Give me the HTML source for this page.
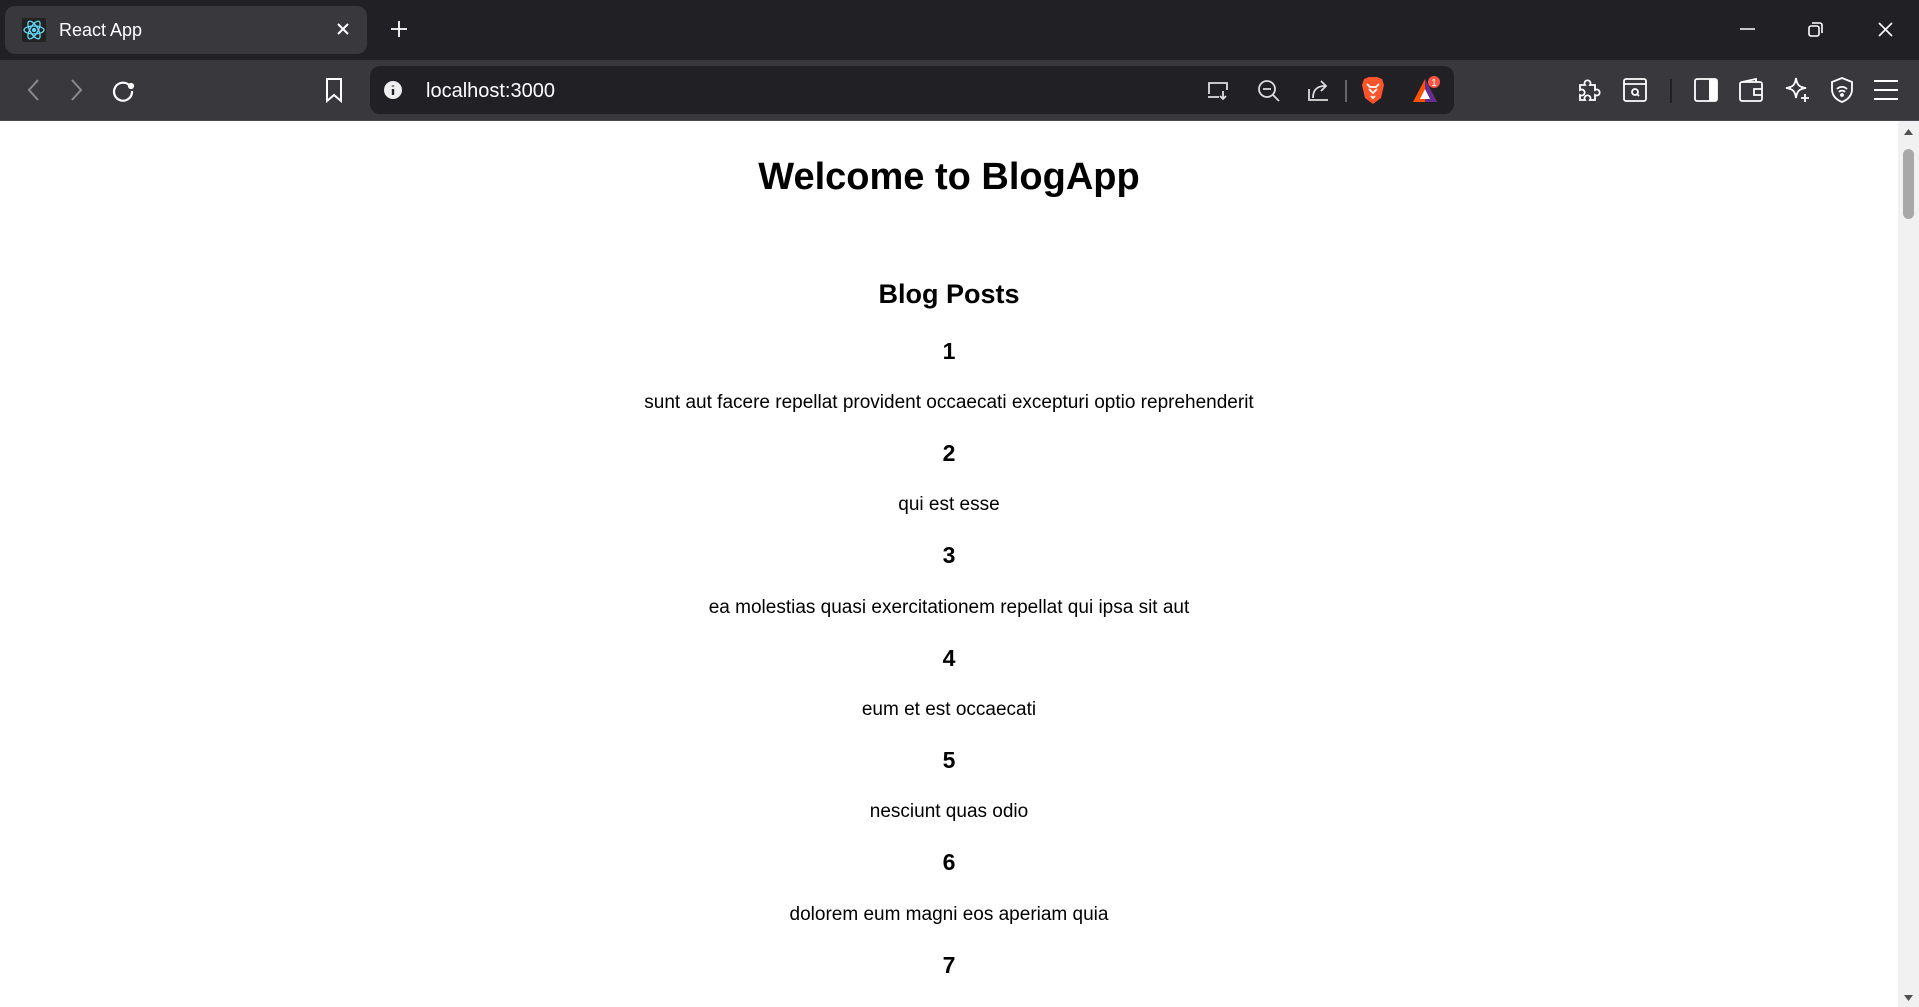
<!DOCTYPE html>
<html><head><meta charset="utf-8"><style>
*{margin:0;padding:0;box-sizing:border-box}
body{width:1919px;height:1007px;overflow:hidden;background:#fff;font-family:"Liberation Sans",sans-serif;position:relative}
.tabbar{position:absolute;left:0;top:0;width:1919px;height:60px;background:#202025}
.tab{position:absolute;left:5px;top:6px;width:362px;height:48px;background:#38383d;border-radius:10px}
.toolbar{position:absolute;left:0;top:60px;width:1919px;height:61px;background:#38383d;border-bottom:1px solid #4a4a50}
.url{position:absolute;left:370px;top:66px;width:1084px;height:48px;background:#202025;border-radius:10px}
.ab{position:absolute}
svg{position:absolute;overflow:visible}
.c{position:absolute;left:0;width:1898px;text-align:center;color:#000}
.n{font-weight:bold;font-size:23px}
.p{font-size:19px}
.sb{position:absolute;left:1898px;top:121px;width:21px;height:886px;background:#f1f1f1}
</style></head><body>
<div class="tabbar"></div>
<div class="tab"></div>
<svg style="left:22px;top:18px" width="24" height="24" viewBox="-12 -12 24 24"><rect x="-12" y="-12" width="24" height="24" fill="#222" rx="2"/><g fill="none" stroke="#61dafb" stroke-width="1.3"><ellipse rx="10" ry="4"/><ellipse rx="10" ry="4" transform="rotate(60)"/><ellipse rx="10" ry="4" transform="rotate(120)"/></g><circle r="2" fill="#61dafb"/></svg>
<div class="ab" style="left:59px;top:20px;color:#fff;font-size:18px">React App</div>
<svg style="left:337px;top:23px" width="12" height="12"><path d="M1 1L11 11M11 1L1 11" stroke="#fff" stroke-width="2"/></svg>
<svg style="left:391px;top:21px" width="16" height="16"><path d="M8 0V16M0 8H16" stroke="#fff" stroke-width="1.8"/></svg>
<svg style="left:1740px;top:28px" width="15" height="2"><path d="M0 1H15" stroke="#fff" stroke-width="1.5"/></svg>
<svg style="left:1808px;top:22px" width="15" height="15" fill="none" stroke="#fff" stroke-width="1.6"><rect x="1" y="4" width="10" height="10" rx="2"/><path d="M4 1H12a2 2 0 0 1 2 2V11"/></svg>
<svg style="left:1878px;top:22px" width="15" height="15"><path d="M1 1L14 14M14 1L1 14" stroke="#fff" stroke-width="1.6"/></svg>
<div class="toolbar"></div>
<svg style="left:27px;top:79px" width="12" height="22"><path d="M11 1L2 11L11 21" fill="none" stroke="#8a8a90" stroke-width="2"/></svg>
<svg style="left:71px;top:79px" width="12" height="22"><path d="M1 1L10 11L1 21" fill="none" stroke="#8a8a90" stroke-width="2"/></svg>
<svg style="left:111px;top:78px" width="24" height="24" fill="none" stroke="#fff" stroke-width="2.2"><path d="M19 8A9 9 0 1 0 21 13"/><circle cx="20" cy="8" r="2" fill="#fff"/></svg>
<svg style="left:325px;top:78px" width="18" height="25"><path d="M2 1H16V23L9 17L2 23Z" fill="none" stroke="#fff" stroke-width="2"/></svg>
<div class="url"></div>
<svg style="left:384px;top:81px" width="18" height="18"><circle cx="9" cy="9" r="9" fill="#eee"/><path d="M9 8V14M9 4.5V5.5" stroke="#202025" stroke-width="2.4"/></svg>
<div class="ab" style="left:426px;top:80px;color:#fff;font-size:20px">localhost:3000</div>
<svg style="left:1207px;top:80px" width="22" height="22" fill="none" stroke="#ddd" stroke-width="1.8"><path d="M2 14V3H20V10M1 17H12M16 11V19M13 16L16 19L19 16"/></svg>
<svg style="left:1257px;top:79px" width="24" height="24" fill="none" stroke="#ddd" stroke-width="1.8"><circle cx="10" cy="10" r="8"/><path d="M6 10H14M16 16L22 22"/></svg>
<svg style="left:1308px;top:79px" width="22" height="22" fill="none" stroke="#ddd" stroke-width="1.8"><path d="M1 10V21H20M5 19C5 10 10 7 17 7M13 2L18 7L13 12"/></svg>
<div class="ab" style="left:1345px;top:80px;width:2px;height:22px;background:#666"></div>
<svg style="left:1361px;top:76px" width="24" height="29"><path d="M3 3L8 1H16L21 3L23 9L20 22L12 28L4 22L1 9Z" fill="#fb542b"/><path d="M6 8L9 11H15L18 8M8 13L12 17L16 13M10 20L12 22L14 20" stroke="#fff" stroke-width="1.8" fill="none"/></svg>
<svg style="left:1412px;top:78px" width="30" height="26"><path d="M13 1L25 24H1Z" fill="#ff5000"/><path d="M13 1L25 24H13Z" fill="#662d91"/><path d="M13 11L18 21H8Z" fill="#fff"/><circle cx="22" cy="4" r="6" fill="#fa5542"/><text x="22" y="8" font-size="10" fill="#fff" text-anchor="middle" font-family="Liberation Sans">1</text></svg>
<svg style="left:1578px;top:78px" width="24" height="24" fill="none" stroke="#fff" stroke-width="1.8"><path d="M2 7H7A3 3 0 1 1 12 7H17V12A3 3 0 1 1 17 17V22H12A3 3 0 1 0 7 22H2V17A3 3 0 1 0 2 12Z"/></svg>
<svg style="left:1623px;top:78px" width="24" height="24" fill="none" stroke="#fff" stroke-width="1.8"><rect x="1" y="1" width="22" height="22" rx="2"/><path d="M1 6H23"/><circle cx="12" cy="14" r="3"/><path d="M14 16L16 18"/></svg>
<div class="ab" style="left:1670px;top:79px;width:2px;height:24px;background:#202025"></div>
<svg style="left:1694px;top:78px" width="24" height="24"><rect x="1" y="1" width="22" height="22" rx="2" fill="none" stroke="#fff" stroke-width="1.8"/><rect x="15" y="1" width="8" height="22" fill="#fff"/></svg>
<svg style="left:1739px;top:78px" width="24" height="24" fill="none" stroke="#fff" stroke-width="1.8"><rect x="1" y="4" width="22" height="19" rx="2"/><path d="M3 4L17 1V4M23 11H15V17H23"/></svg>
<svg style="left:1785px;top:77px" width="26" height="26" fill="none" stroke="#fff" stroke-width="1.8"><path d="M11 1C12 8 14 10 21 11C14 12 12 14 11 21C10 14 8 12 1 11C8 10 10 8 11 1Z"/><path d="M20 17V25M16 21H24"/></svg>
<svg style="left:1831px;top:77px" width="22" height="26" fill="none" stroke="#fff" stroke-width="1.8"><path d="M11 1L21 5V12C21 19 16 23 11 25C6 23 1 19 1 12V5Z"/><path d="M6 12A7 7 0 0 1 16 12M8 15A4 4 0 0 1 14 15"/><circle cx="11" cy="18" r="1" fill="#fff"/></svg>
<svg style="left:1874px;top:80px" width="24" height="20"><path d="M0 1H24M0 10H24M0 19H24" stroke="#fff" stroke-width="2"/></svg>

<div class="c" style="top:156px;font-size:38px;font-weight:bold">Welcome to BlogApp</div>
<div class="c" style="top:279px;font-size:27px;font-weight:bold">Blog Posts</div>
<div class="c n" style="top:338px">1</div>
<div class="c p" style="top:392px">sunt aut facere repellat provident occaecati excepturi optio reprehenderit</div>
<div class="c n" style="top:440px">2</div>
<div class="c p" style="top:494px">qui est esse</div>
<div class="c n" style="top:542px">3</div>
<div class="c p" style="top:597px">ea molestias quasi exercitationem repellat qui ipsa sit aut</div>
<div class="c n" style="top:645px">4</div>
<div class="c p" style="top:699px">eum et est occaecati</div>
<div class="c n" style="top:747px">5</div>
<div class="c p" style="top:801px">nesciunt quas odio</div>
<div class="c n" style="top:849px">6</div>
<div class="c p" style="top:904px">dolorem eum magni eos aperiam quia</div>
<div class="c n" style="top:952px">7</div>

<div class="sb"></div>
<svg style="left:1903px;top:128px" width="11" height="8"><path d="M5.5 1L10 7H1Z" fill="#505050"/></svg>
<div class="ab" style="left:1903px;top:149px;width:11px;height:70px;background:#a8a8a8;border-radius:6px"></div>
<svg style="left:1903px;top:994px" width="11" height="8"><path d="M5.5 7L10 1H1Z" fill="#505050"/></svg>
</body></html>
